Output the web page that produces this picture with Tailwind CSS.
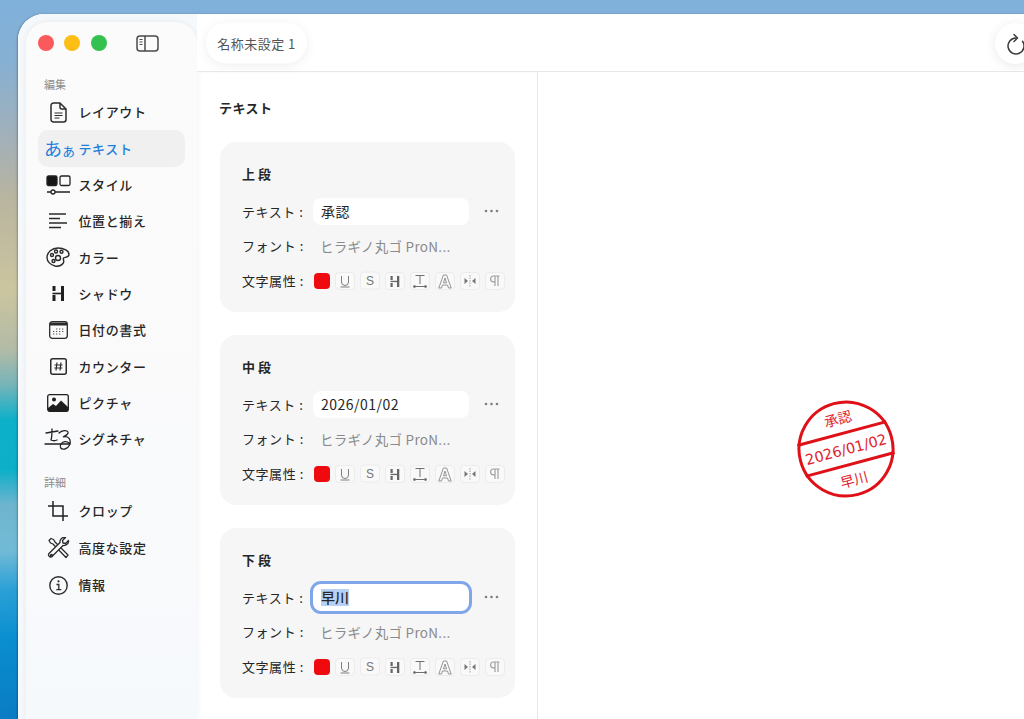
<!DOCTYPE html>
<html lang="ja">
<head>
  <meta charset="UTF-8" />
  <title>テキスト</title>
  <script src="https://cdn.jsdelivr.net/npm/@tailwindcss/browser@4"></script>
</head>
<body class="w-[1024px] h-[719px] overflow-hidden bg-[linear-gradient(180deg,#7fb1dc_0px,#86b0d3_60px,#a3b0b8_140px,#b9b59f_200px,#cbc59f_290px,#b2bba6_350px,#76b4b9_385px,#0db0c9_420px,#0dafc8_470px,#6fb4cf_505px,#72bbd6_550px,#2aa0d6_590px,#0a8ed0_640px,#0a7cc4_719px)] font-['Noto_Sans_CJK_JP','Noto_Sans',sans-serif] text-[#262626]">
  <div class="pl-[18px] pt-[14px] h-full">
    <div class="w-[1040px] h-[705px] flex bg-white rounded-tl-[26px] overflow-hidden shadow-[-1px_0_2px_rgba(0,0,0,0.25)]">

      <!-- サイドバー -->
      <div class="w-[179px] h-full pl-[8px] pt-[8px] bg-[#f6f9fc] shrink-0">
        <aside class="w-[171px] h-full rounded-t-[22px] bg-[linear-gradient(180deg,#fbfbfb,#fafafb_50%,#f6f9fc)] shadow-[0_0_6px_rgba(0,0,0,0.07)] pl-[12px] pt-[13px]">
          <div class="flex items-center h-[16px]">
            <span class="w-[16px] h-[16px] rounded-full bg-[#fb5a5c]"></span>
            <span class="w-[16px] h-[16px] rounded-full bg-[#fdbf15] ml-[10px]"></span>
            <span class="w-[16px] h-[16px] rounded-full bg-[#34c14f] ml-[11px]"></span>
            <svg class="ml-[29px]" width="23" height="17" viewBox="0 0 23 17" fill="none" stroke="#4a4a4a" stroke-width="1.5"><rect x="1" y="1" width="21" height="15" rx="3"/><path d="M9 1v15"/><path d="M3.5 4.5h3M3.5 7h3M3.5 9.500h3" stroke-width="1"/></svg>
          </div>

          <div class="mt-[25px] h-[16px] leading-[16px] pl-[6px] text-[11px] text-[#8c8c8c]">編集</div>
          <nav class="mt-[2px] w-[147px]">
            <a class="flex items-center h-[36.33px]">
              <span class="w-[40.500px] flex justify-center"><svg width="17" height="21" viewBox="0 0 17 21" fill="none" stroke="#2b2b2b" stroke-width="1.5" stroke-linejoin="round"><path d="M3.500 1h6.500l6 6v10.500a2.500 2.500 0 0 1-2.500 2.500h-10a2.500 2.500 0 0 1-2.500-2.500v-14a2.500 2.500 0 0 1 2.500-2.500z"/><path d="M10 1v4.500a1.500 1.500 0 0 0 1.500 1.500h4.500"/><path d="M4.500 11h8M4.500 13.500h8M4.500 16h5" stroke-width="1.100"/></svg></span>
              <span class="text-[13px] font-medium tracking-[0.6px]">レイアウト</span>
            </a>
            <a class="flex items-center h-[36.33px] rounded-[10px] bg-[#f0f0f1] text-[#1f7fdc]">
              <span class="w-[40.500px] pl-[6px] whitespace-nowrap leading-none -tracking-[1px]"><span class="text-[18px]">あ</span><span class="text-[15px]">ぁ</span></span>
              <span class="text-[13px] font-medium tracking-[0.6px]">テキスト</span>
            </a>
            <a class="flex items-center h-[36.33px]">
              <span class="w-[40.500px] flex justify-center"><svg width="25" height="20" viewBox="0 0 25 20" fill="none" stroke="#222" stroke-width="1.300"><rect x="1" y="1" width="10" height="9.500" rx="1.500" fill="#161616"/><rect x="14" y="1" width="10" height="9.500" rx="1.500"/><path d="M1 17h4M9 17h15"/><circle cx="7" cy="17" r="2"/></svg></span>
              <span class="text-[13px] font-medium tracking-[0.6px]">スタイル</span>
            </a>
            <a class="flex items-center h-[36.33px]">
              <span class="w-[40.500px] flex justify-center"><svg width="20" height="18" viewBox="0 0 20 18" fill="none" stroke="#2b2b2b" stroke-width="1.400"><path d="M1 2h17M1 6.500h11M1 11h18M1 15.500h12"/></svg></span>
              <span class="text-[13px] font-medium tracking-[0.6px]">位置と揃え</span>
            </a>
            <a class="flex items-center h-[36.33px]">
              <span class="w-[40.500px] flex justify-center"><svg width="24" height="20" viewBox="0 0 24 20" fill="none" stroke="#2b2b2b" stroke-width="1.400"><path d="M12 1c6 0 11 3 11 6.500 0 3-4.500 2.500-5.500 3.500s1.500 3-.5 5.500c-2 2.500-5 3-8 2.500C4.500 18 1 14.500 1 10.500 1 5 6 1 12 1z"/><circle cx="6" cy="8" r="1.500"/><circle cx="10" cy="4.500" r="1.500"/><circle cx="15.500" cy="4.800" r="1.500"/><circle cx="12" cy="11" r="2.500"/><circle cx="7.500" cy="14" r="1.500"/></svg></span>
              <span class="text-[13px] font-medium tracking-[0.6px]">カラー</span>
            </a>
            <a class="flex items-center h-[36.33px]">
              <span class="w-[40.500px] flex justify-center"><svg width="13" height="15" viewBox="0 0 13 15" fill="#1f1f1f"><rect x="0.500" y="0" width="3" height="5"/><rect x="0.500" y="9" width="3" height="6"/><rect x="0.500" y="6.700" width="9" height="1.600"/><rect x="9" y="0" width="3" height="15"/></svg></span>
              <span class="text-[13px] font-medium tracking-[0.6px]">シャドウ</span>
            </a>
            <a class="flex items-center h-[36.33px]">
              <span class="w-[40.500px] flex justify-center"><svg width="19" height="18" viewBox="0 0 19 18" fill="none" stroke="#2b2b2b" stroke-width="1.300"><rect x="0.700" y="0.700" width="17.600" height="16.600" rx="2.500"/><path d="M1 1.500h17v3h-17z" fill="#2b2b2b" stroke="none"/><path d="M7 8h1.300M10 8h1.300M13 8h1.300M4 10.500h1.300M7 10.500h1.300M10 10.500h1.300M13 10.500h1.300M4 13h1.300M7 13h1.300M10 13h1.300" stroke-width="1.200" stroke="#555"/></svg></span>
              <span class="text-[13px] font-medium tracking-[0.6px]">日付の書式</span>
            </a>
            <a class="flex items-center h-[36.33px]">
              <span class="w-[40.500px] flex justify-center"><svg width="17" height="17" viewBox="0 0 17 17" fill="none" stroke="#2b2b2b"><rect x="0.750" y="0.750" width="15.500" height="15.500" rx="2" stroke-width="1.500"/><path d="M7 4.500l-1 8M11 4.500l-1 8M4.500 7h8M4.300 10h8" stroke-width="1.200"/></svg></span>
              <span class="text-[13px] font-medium tracking-[0.6px]">カウンター</span>
            </a>
            <a class="flex items-center h-[36.33px]">
              <span class="w-[40.500px] flex justify-center"><svg width="22" height="18" viewBox="0 0 22 18" fill="none" stroke="#1f1f1f" stroke-width="1.300"><rect x="0.700" y="0.700" width="20.600" height="16.600" rx="2"/><circle cx="7" cy="5.500" r="2" fill="#1f1f1f" stroke="none"/><path d="M1 14l5-4 3 2 5-5.500 7 6.500v3a1.500 1.500 0 0 1-1.500 1.500h-17a1.500 1.500 0 0 1-1.500-1.500z" fill="#1f1f1f" stroke="none"/></svg></span>
              <span class="text-[13px] font-medium tracking-[0.6px]">ピクチャ</span>
            </a>
            <a class="flex items-center h-[36.33px]">
              <span class="w-[40.500px] flex justify-center"><svg width="28" height="24" viewBox="0 0 28 24" fill="none" stroke="#222" stroke-width="1.300" stroke-linecap="round"><path d="M1 17h25"/><path d="M2 6l12-2M8 2c0 4 0 8-1 11 2 1 4 1 6 0"/><path d="M15 6c3-3 8-3 9-1s-3 4-5 5c3-1 6 0 7 3s-1 8-5 9-6-2-4-5 6-3 8-1"/></svg></span>
              <span class="text-[13px] font-medium tracking-[0.6px]">シグネチャ</span>
            </a>
          </nav>

          <div class="mt-[16.500px] h-[16px] leading-[16px] pl-[6px] text-[11px] text-[#8c8c8c]">詳細</div>
          <nav class="mt-[3px] w-[147px]">
            <a class="flex items-center h-[36.900px]">
              <span class="w-[40.500px] flex justify-center"><svg width="20" height="20" viewBox="0 0 20 20" fill="none" stroke="#222" stroke-width="1.500"><path d="M5 0v15h15"/><path d="M0 5h15v15"/></svg></span>
              <span class="text-[13px] font-medium tracking-[0.6px]">クロップ</span>
            </a>
            <a class="flex items-center h-[36.900px]">
              <span class="w-[40.500px] flex justify-center"><svg width="23" height="22" viewBox="0 0 23 22" fill="none" stroke="#2b2b2b" stroke-width="1.300" stroke-linejoin="round"><path d="M2 3.500l2-2 2.500 1 1.500 2.500 13 13-2 2.500-13-13.500-2.500-1z"/><path d="M21.500 3.500l-3 3-2.500-.5-.5-2.500 3-3c-3-.7-6 1.500-5.500 5l-11 11c-1.500 2 1 4.500 3 3l11-11c3 .5 6-2 5.500-5z" fill="#fbfbfb"/><circle cx="4.500" cy="18.500" r="1"/></svg></span>
              <span class="text-[13px] font-medium tracking-[0.6px]">高度な設定</span>
            </a>
            <a class="flex items-center h-[36.900px]">
              <span class="w-[40.500px] flex justify-center"><svg width="19" height="19" viewBox="0 0 19 19" fill="none" stroke="#2b2b2b" stroke-width="1.400"><circle cx="9.500" cy="9.500" r="8.700"/><circle cx="9.500" cy="5.300" r="1.100" fill="#2b2b2b" stroke="none"/><path d="M7.500 8.500h2.300v5M7.300 13.700h5" stroke-width="1.300"/></svg></span>
              <span class="text-[13px] font-medium tracking-[0.6px]">情報</span>
            </a>
          </nav>
        </aside>
      </div>

      <!-- メイン -->
      <div class="flex-1 flex flex-col min-w-0">
        <header class="h-[58px] shrink-0 flex bg-white border-b border-[#e8e8e8] pl-[9px] pt-[9px] shadow-[0_1px_2px_rgba(0,0,0,0.02)]">
          <div class="w-[101px] h-[41px] rounded-full bg-white shadow-[0_2px_12px_rgba(0,0,0,0.07)] flex items-center justify-center text-[13px] text-[#555] tracking-[0.5px] -translate-y-[0.5px]">名称未設定 1</div>
          <div class="ml-[688px] w-[41px] h-[41px] rounded-full bg-white shadow-[0_2px_12px_rgba(0,0,0,0.09)] flex items-center justify-center shrink-0">
            <svg width="20" height="22" viewBox="0 0 20 22" fill="none" stroke="#3a3a3a" stroke-width="1.500" stroke-linecap="round" stroke-linejoin="round"><path d="M10 5a8 8 0 1 0 6.500 3.300"/><path d="M8 1.500l3.500 3.500-3.500 3.500"/></svg>
          </div>
        </header>

        <div class="flex-1 flex min-h-0">
          <section class="w-[341px] shrink-0 border-r border-[#e8e8e8] pl-[22px] pt-[26px]">
            <h2 class="h-[20px] leading-[20px] text-[13px] font-bold tracking-[0.5px]">テキスト</h2>
            <div id="cards" class="mt-[24px] ml-[1px] flex flex-col gap-[23px]"></div>
          </section>
          <section class="flex-1 bg-white pl-[259px] pt-[328px]">
            <svg width="98" height="98" viewBox="0 0 98 98" fill="none">
              <g transform="rotate(-15 49 49)" stroke="#e01018" stroke-width="3">
                <circle cx="49" cy="49" r="47" />
                <path d="M3 33h92M3 65h92" stroke-width="3"/>
                <g stroke="none" fill="#e0242c" text-anchor="middle" font-family="'Noto Sans CJK JP',sans-serif">
                  <text x="49" y="23" font-size="14">承認</text>
                  <text x="49" y="54.500" font-size="14.500" font-family="'DejaVu Sans',sans-serif">2026/01/02</text>
                  <text x="49" y="86" font-size="14">早川</text>
                </g>
              </g>
            </svg>
          </section>
        </div>
      </div>
    </div>
  </div>

  <script>
    const iconos = `
      <span class="w-[20px] h-[18px] mr-[5px] rounded-[4px] bg-[#f9f9f9] border border-[#ececec] flex items-center justify-center">
        <svg width="12" height="13" viewBox="0 0 12 13" fill="none" stroke="#7f7f7f" stroke-width="1"><path d="M2.500 1v6a3.500 3.500 0 0 0 7 0v-6M1.500 12h9"/></svg>
      </span>
      <span class="w-[20px] h-[18px] mr-[5px] rounded-[4px] bg-[#f9f9f9] border border-[#ececec] flex items-center justify-center text-[12px] leading-none text-[#777] font-['Liberation_Sans'] -translate-y-[0.5px]">S</span>
      <span class="w-[20px] h-[18px] mr-[5px] rounded-[4px] bg-[#f9f9f9] border border-[#ececec] flex items-center justify-center">
        <svg width="10" height="11" viewBox="0 0 10 11" fill="#666"><rect x="0.500" y="0" width="2.200" height="4"/><rect x="0.500" y="7" width="2.200" height="4"/><rect x="0.500" y="4.800" width="7" height="1.300"/><rect x="7" y="0" width="2.300" height="11"/></svg>
      </span>
      <span class="w-[20px] h-[18px] mr-[5px] rounded-[4px] bg-[#f9f9f9] border border-[#ececec] flex items-center justify-center">
        <svg width="14" height="14" viewBox="0 0 14 14" fill="none" stroke="#707070" stroke-width="1"><path d="M2.500 1.500h9M7 1.500v8.500"/><path d="M1 12.500h12" /><circle cx="1.500" cy="12.500" r="1" fill="#707070"/><circle cx="12.500" cy="12.500" r="1" fill="#707070"/></svg>
      </span>
      <span class="w-[20px] h-[18px] mr-[5px] rounded-[4px] bg-[#f9f9f9] border border-[#ececec] flex items-center justify-center">
        <svg width="14" height="15" viewBox="0 0 14 15" fill="none" stroke="#8a8a8a" stroke-width="0.900"><path d="M0.800 14l4.600-13h3.200l4.600 13h-2.700l-1-3h-5l-1 3z"/><path d="M5.500 8.800l1.500-4.800 1.500 4.800z"/></svg>
      </span>
      <span class="w-[20px] h-[18px] mr-[5px] rounded-[4px] bg-[#f9f9f9] border border-[#ececec] flex items-center justify-center">
        <svg width="14" height="12" viewBox="0 0 14 12" fill="#777"><path d="M1.500 3l3.500 3-3.500 3zM12.500 3l-3.500 3 3.500 3z"/><path d="M7 0v12" stroke="#999" stroke-width="0.900" stroke-dasharray="1.500 1"/></svg>
      </span>
      <span class="w-[20px] h-[18px] rounded-[4px] bg-[#f9f9f9] border border-[#ececec] flex items-center justify-center">
        <svg width="10" height="12" viewBox="0 0 10 12" fill="none" stroke="#a0a0a0" stroke-width="1.200"><path d="M5 1v10M8 1v10M9.500 1h-6a2.800 2.800 0 0 0 0 5.800h1.500"/></svg>
      </span>`;

    const filas = [
      { titulo: '上 段', valor: '承認' },
      { titulo: '中 段', valor: '2026/01/02' },
      { titulo: '下 段', valor: '早川', activo: true },
    ];

    document.getElementById('cards').innerHTML = filas.map(f => `
      <div class="w-[295px] h-[170px] rounded-[16px] bg-[#f6f6f7] pl-[22px] pt-[23px]">
        <div class="h-[18px] leading-[18px] text-[13px] font-bold">${f.titulo}</div>
        <div class="mt-[15px] h-[27px] flex items-center">
          <span class="w-[71px] text-[13px] tracking-[0.55px] whitespace-nowrap">テキスト :</span>
          ${f.activo
            ? `<span class="w-[156px] h-[27px] rounded-[8px] bg-white pl-[8px] text-[14px] flex items-center outline-[3px] outline-[#7fa6e8]"><span class="bg-[#b5d2f6] leading-[17px] font-medium">${f.valor}</span></span>`
            : `<span class="w-[156px] h-[27px] rounded-[8px] bg-white pl-[8px] text-[14px] flex items-center tracking-[0.5px]">${f.valor}</span>`}
          <svg class="ml-[15px] -translate-y-[1px]" width="15" height="4" viewBox="0 0 15 4" fill="#808080"><circle cx="2" cy="2" r="1.300"/><circle cx="7.500" cy="2" r="1.300"/><circle cx="13" cy="2" r="1.300"/></svg>
        </div>
        <div class="mt-[7.500px] h-[27px] flex items-center">
          <span class="w-[78px] text-[13px] tracking-[0.55px] whitespace-nowrap">フォント :</span>
          <span class="text-[13.500px] text-[#8a8a8a] tracking-[0.3px] whitespace-nowrap">ヒラギノ丸ゴ ProN...</span>
        </div>
        <div class="mt-[12.500px] h-[18px] flex items-center">
          <span class="w-[72px] text-[13px] tracking-[0.55px] whitespace-nowrap">文字属性 :</span>
          <span class="w-[16px] h-[16px] rounded-[4px] bg-[#ee0a0f] mr-[5px]"></span>
          ${iconos}
        </div>
      </div>`).join('');
  </script>
</body>
</html>
